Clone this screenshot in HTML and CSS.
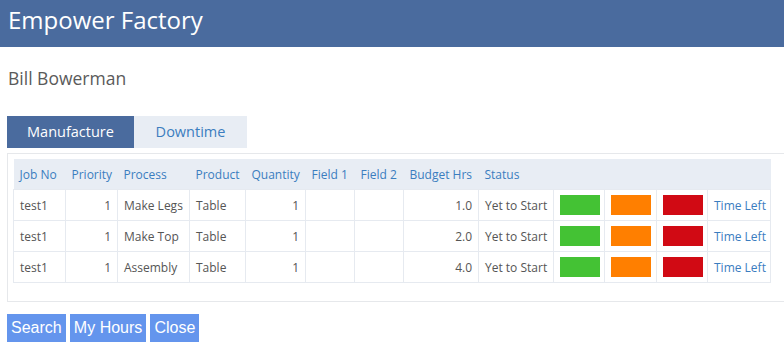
FILE: index.html
```html
<!DOCTYPE html>
<html lang="en">
<head>
    <meta charset="UTF-8">
    <meta name="viewport" content="width=device-width, initial-scale=1.0">
    <title>Empower Factory</title>
    <link rel="stylesheet" href="styles.css">
</head>
<body>

<header class="top-bar">
    <h1>Empower Factory</h1>
</header>

<div class="content">
    <h2 class="user-name">Bill Bowerman</h2>

    <ul class="tabs">
        <li class="tab active">Manufacture</li>
        <li class="tab">Downtime</li>
    </ul>

    <div class="panel">
        <table class="jobs">
            <colgroup>
                <col style="width:52px"><col style="width:52px"><col style="width:72px">
                <col style="width:56px"><col style="width:60px"><col style="width:49px">
                <col style="width:49px"><col style="width:75px"><col style="width:75px">
                <col style="width:51px"><col style="width:52px"><col style="width:51px">
                <col style="width:63px">
            </colgroup>
            <thead>
                <tr>
                    <th>Job No</th>
                    <th>Priority</th>
                    <th>Process</th>
                    <th>Product</th>
                    <th>Quantity</th>
                    <th>Field 1</th>
                    <th>Field 2</th>
                    <th>Budget Hrs</th>
                    <th>Status</th>
                    <th></th>
                    <th></th>
                    <th></th>
                    <th></th>
                </tr>
            </thead>
            <tbody>
                <tr>
                    <td>test1</td>
                    <td class="num">1</td>
                    <td>Make Legs</td>
                    <td>Table</td>
                    <td class="num">1</td>
                    <td></td>
                    <td></td>
                    <td class="num">1.0</td>
                    <td>Yet to Start</td>
                    <td><span class="swatch green"></span></td>
                    <td><span class="swatch orange"></span></td>
                    <td><span class="swatch red"></span></td>
                    <td><a href="#">Time Left</a></td>
                </tr>
                <tr>
                    <td>test1</td>
                    <td class="num">1</td>
                    <td>Make Top</td>
                    <td>Table</td>
                    <td class="num">1</td>
                    <td></td>
                    <td></td>
                    <td class="num">2.0</td>
                    <td>Yet to Start</td>
                    <td><span class="swatch green"></span></td>
                    <td><span class="swatch orange"></span></td>
                    <td><span class="swatch red"></span></td>
                    <td><a href="#">Time Left</a></td>
                </tr>
                <tr>
                    <td>test1</td>
                    <td class="num">1</td>
                    <td>Assembly</td>
                    <td>Table</td>
                    <td class="num">1</td>
                    <td></td>
                    <td></td>
                    <td class="num">4.0</td>
                    <td>Yet to Start</td>
                    <td><span class="swatch green"></span></td>
                    <td><span class="swatch orange"></span></td>
                    <td><span class="swatch red"></span></td>
                    <td><a href="#">Time Left</a></td>
                </tr>
            </tbody>
        </table>
    </div>

    <div class="actions">
        <button type="button">Search</button>
        <button type="button">My Hours</button>
        <button type="button">Close</button>
    </div>
</div>

</body>
</html>
```

FILE: styles.css
```css
body {
    margin: 0;
    font-family: "Open Sans", "Noto Sans", sans-serif;
    color: #555;
    background-color: #fff;
    overflow: hidden;
}

.top-bar {
    background-color: #4a6b9e;
    height: 47px;
    padding: 0 8px;
}

.top-bar h1 {
    margin: 0;
    color: #fff;
    font-size: 24px;
    font-weight: normal;
    line-height: 40px;
}

.content {
    padding: 0 0 0 7px;
}

.user-name {
    margin: 17px 0 0 1px;
    font-size: 17.5px;
    font-weight: normal;
    line-height: 28px;
    color: #5a5a5a;
}

.tabs {
    list-style: none;
    display: flex;
    margin: 24px 0 0 0;
    padding: 0;
}

.tab {
    width: 113px;
    height: 32px;
    line-height: 32px;
    text-align: center;
    font-size: 14.5px;
    color: #3b7dbf;
    background-color: #e8edf4;
}

.tab.active {
    width: 127px;
    color: #fff;
    background-color: #4a6b9e;
}

.panel {
    margin-top: 5px;
    padding: 5px 0 18px 5px;
    border: 1px solid #e6e8eb;
    border-right: none;
}

.jobs {
    table-layout: fixed;
    width: 757px;
    border-collapse: collapse;
    font-size: 12px;
}

.jobs th {
    height: 30px;
    padding: 0 6px;
    text-align: left;
    font-weight: normal;
    color: #3b7dbf;
    background-color: #e8edf4;
    white-space: nowrap;
}

.jobs td {
    height: 30px;
    padding: 0 6px;
    border: 1px solid #e6eaf0;
    white-space: nowrap;
}

.jobs td.num {
    text-align: right;
}

.jobs a {
    color: #3b7dbf;
    text-decoration: none;
}

.swatch {
    display: block;
    width: 40px;
    height: 20px;
}

.green {
    background-color: #44c234;
}

.orange {
    background-color: #ff7f00;
}

.red {
    background-color: #d10a14;
}

.actions {
    margin-top: 12px;
}

button {
    height: 28px;
    padding: 0 4px;
    border: none;
    background-color: #6495ed;
    color: #fff;
    font-family: "Liberation Sans", Arial, sans-serif;
    font-size: 16px;
}
```
